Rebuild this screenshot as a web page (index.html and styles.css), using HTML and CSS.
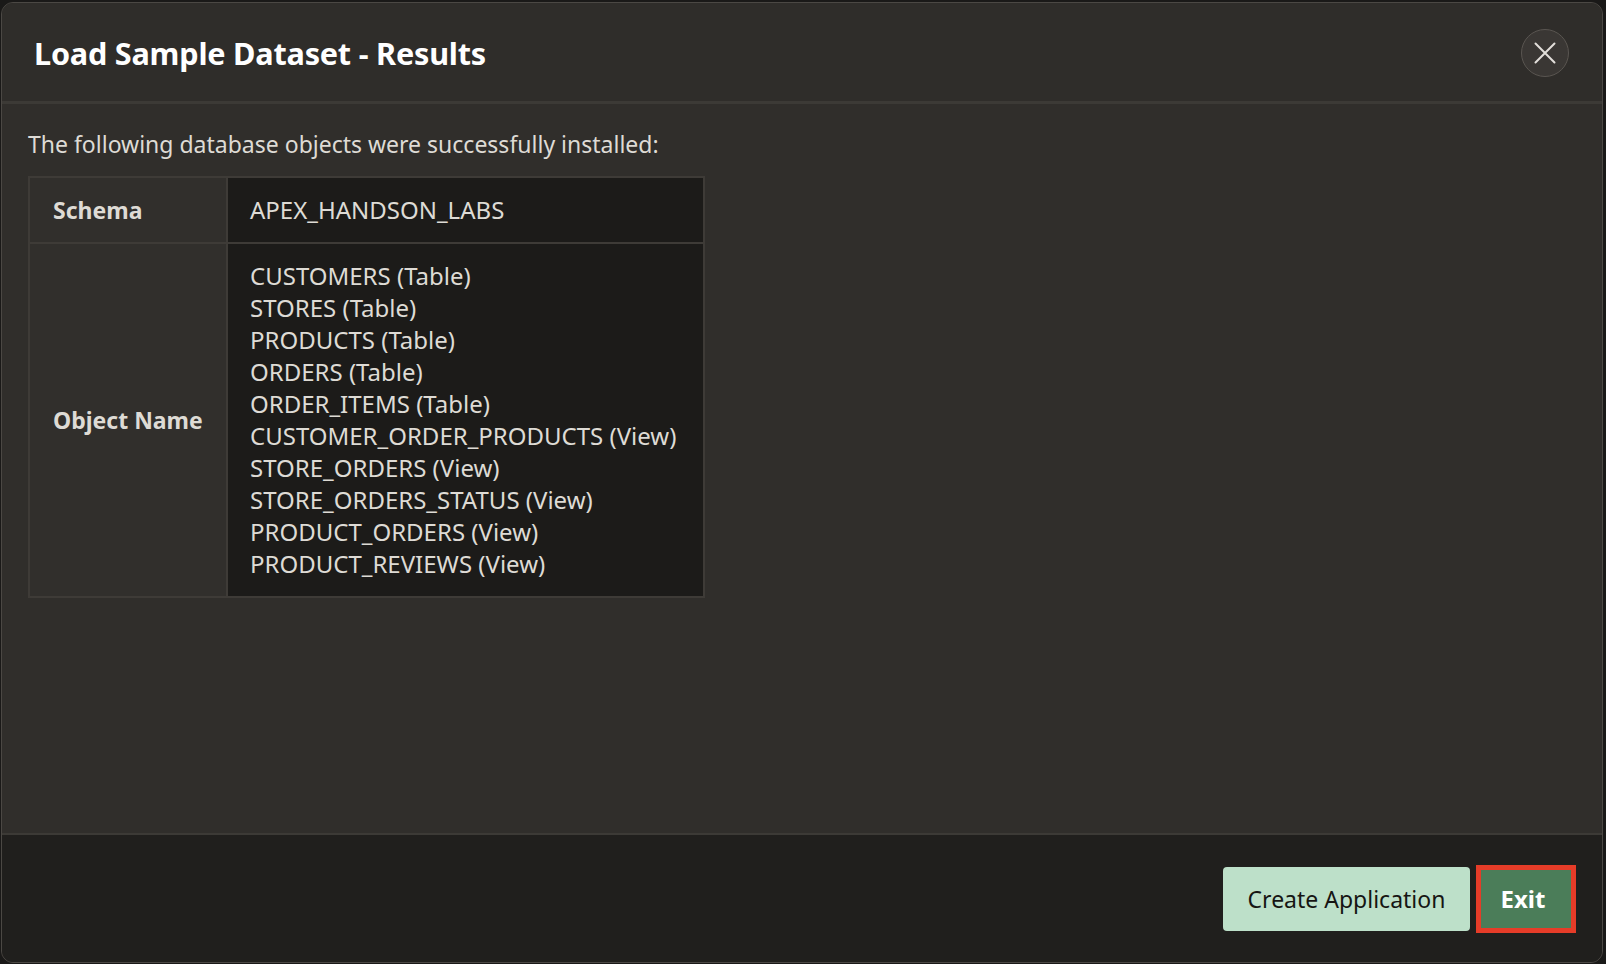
FILE: index.html
```html
<!DOCTYPE html>
<html lang="en">
<head>
<meta charset="utf-8">
<title>Load Sample Dataset - Results</title>
<link rel="stylesheet" href="styles.css">
</head>
<body>
<div class="dialog">
  <header class="dlg-header">
    <h1 class="dlg-title">Load Sample Dataset - Results</h1>
    <button class="close-btn" aria-label="Close">
      <svg width="22" height="22" viewBox="0 0 22 22"><path d="M1.5 1.5 L20.5 20.5 M20.5 1.5 L1.5 20.5" stroke="#e2dfda" stroke-width="2" stroke-linecap="round" fill="none"/></svg>
    </button>
  </header>
  <main class="dlg-body">
    <p class="intro">The following database objects were successfully installed:</p>
    <table class="results">
      <tr class="row-schema">
        <th>Schema</th>
        <td>APEX_HANDSON_LABS</td>
      </tr>
      <tr class="row-objects">
        <th>Object Name</th>
        <td>
          <div class="obj">CUSTOMERS (Table)</div>
          <div class="obj">STORES (Table)</div>
          <div class="obj">PRODUCTS (Table)</div>
          <div class="obj">ORDERS (Table)</div>
          <div class="obj">ORDER_ITEMS (Table)</div>
          <div class="obj">CUSTOMER_ORDER_PRODUCTS (View)</div>
          <div class="obj">STORE_ORDERS (View)</div>
          <div class="obj">STORE_ORDERS_STATUS (View)</div>
          <div class="obj">PRODUCT_ORDERS (View)</div>
          <div class="obj">PRODUCT_REVIEWS (View)</div>
        </td>
      </tr>
    </table>
  </main>
  <footer class="dlg-footer">
    <button class="btn btn-create">Create Application</button>
    <button class="btn btn-exit">Exit</button>
  </footer>
</div>
</body>
</html>
```

FILE: styles.css
```css
html, body {
  margin: 0;
  padding: 0;
  background: #1a1918;
  height: 100%;
}
body {
  font-family: "Noto Sans", "Open Sans", sans-serif;
  color: #dedbd5;
}
.dialog {
  box-sizing: border-box;
  margin: 2px 3px 1px 1px;
  height: 961px;
  border: 1px solid #4b4844;
  border-radius: 12px;
  overflow: hidden;
  display: flex;
  flex-direction: column;
  background: #302e2b;
}
.dlg-header {
  box-sizing: border-box;
  height: 101px;
  flex: none;
  display: flex;
  align-items: center;
  justify-content: space-between;
  padding: 0 32px 0 32px;
  background: #2f2d2a;
  border-bottom: 3px solid #3c3a36;
}
.dlg-title {
  margin: 0;
  font-size: 30.6px;
  font-weight: 700;
  color: #ffffff;
  letter-spacing: -0.2px;
  padding-top: 2px;
}
.close-btn {
  box-sizing: border-box;
  width: 48px;
  height: 48px;
  border-radius: 50%;
  border: 1.5px solid #5a5651;
  background: #3a3734;
  display: flex;
  align-items: center;
  justify-content: center;
  padding: 0;
  margin-right: 1px;
  margin-top: 2px;
}
.dlg-body {
  flex: 1;
  padding: 0 26px;
}
.intro {
  margin: 24px 0 16px 0;
  font-size: 23px;
  line-height: 32px;
  color: #dedbd5;
}
.results {
  border-collapse: collapse;
  border: 2px solid #3e3b37;
  width: 677px;
}
.results th,
.results td {
  border: 2px solid #3e3b37;
  text-align: left;
  vertical-align: middle;
  line-height: 32px;
  color: #dedbd5;
}
.results th {
  width: 173px;
  padding: 0 0 0 23px;
  font-size: 23px;
  font-weight: 700;
  background: #312f2c;
}
.results td {
  padding: 0 22px;
  font-size: 24px;
  background: #1c1b19;
}
.row-schema th,
.row-schema td {
  height: 64px;
}
.row-objects td {
  padding-top: 16px;
  padding-bottom: 16px;
}
.dlg-footer {
  box-sizing: border-box;
  height: 129px;
  flex: none;
  display: flex;
  align-items: center;
  justify-content: flex-end;
  gap: 6px;
  padding: 0 26px 0 0;
  background: #201f1d;
  border-top: 2px solid #3c3a36;
}
.btn {
  box-sizing: border-box;
  border: none;
  padding: 0;
  font-family: "Noto Sans", "Open Sans", sans-serif;
  font-size: 23px;
  cursor: pointer;
}
.btn-create {
  width: 247px;
  height: 64px;
  border-radius: 4px;
  background: #bde0c9;
  color: #161513;
}
.btn-exit {
  width: 100px;
  height: 68px;
  border: 5px solid #e63c28;
  background: #4b7d59;
  color: #ffffff;
  font-size: 24px;
  font-weight: 700;
  padding: 0 6px 0 0;
}
```
